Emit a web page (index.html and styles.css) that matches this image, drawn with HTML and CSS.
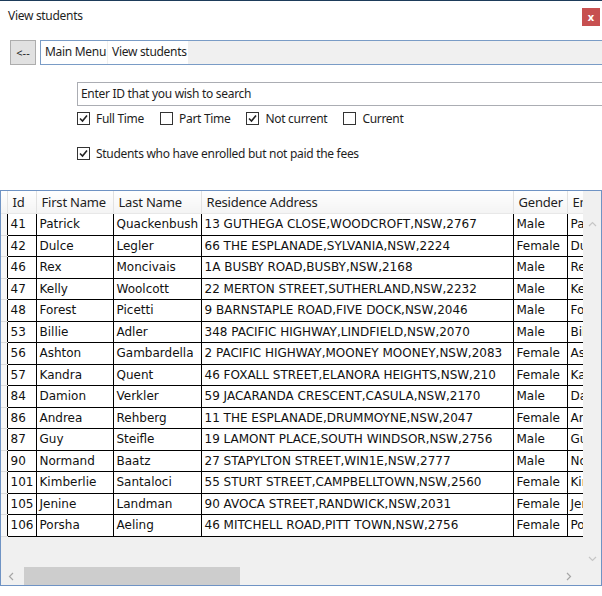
FILE: index.html
```html
<!DOCTYPE html>
<html>
<head>
<meta charset="utf-8">
<link rel="stylesheet" href="styles.css">
</head>
<body>
<div class="window">
  <div class="titlebar">
    <span class="title">View students</span>
    <span class="close">x</span>
  </div>
  <div class="navrow">
    <button class="back">&lt;--</button>
    <div class="crumbs">
      <span class="crumb">Main Menu</span>
      <span class="crumb">View students</span>
    </div>
  </div>
  <div class="filters">
    <div class="search">Enter ID that you wish to search</div>
    <div class="checks">
      <label class="chk"><span class="box on"><svg viewBox="0 0 11 11"><path d="M2 5.5 L4.5 8 L9 2.5"/></svg></span>Full Time</label>
      <label class="chk"><span class="box"></span>Part Time</label>
      <label class="chk"><span class="box on"><svg viewBox="0 0 11 11"><path d="M2 5.5 L4.5 8 L9 2.5"/></svg></span>Not current</label>
      <label class="chk"><span class="box"></span>Current</label>
    </div>
    <div class="checks second">
      <label class="chk"><span class="box on"><svg viewBox="0 0 11 11"><path d="M2 5.5 L4.5 8 L9 2.5"/></svg></span>Students who have enrolled but not paid the fees</label>
    </div>
  </div>
  <div class="gridview">
    <div class="viewport">
      <table class="data">
        <colgroup>
          <col class="c-rh"><col class="c-id"><col class="c-fn"><col class="c-ln"><col class="c-ad"><col class="c-gn"><col class="c-em">
        </colgroup>
        <thead>
          <tr><th class="rh"></th><th>Id</th><th>First Name</th><th>Last Name</th><th>Residence Address</th><th>Gender</th><th>Email</th></tr>
        </thead>
        <tbody>
          <tr><td class="rh"></td><td>41</td><td>Patrick</td><td>Quackenbush</td><td>13 GUTHEGA CLOSE,WOODCROFT,NSW,2767</td><td>Male</td><td>Patrick.Quackenbush@mail.com</td></tr>
          <tr><td class="rh"></td><td>42</td><td>Dulce</td><td>Legler</td><td>66 THE ESPLANADE,SYLVANIA,NSW,2224</td><td>Female</td><td>Dulce.Legler@mail.com</td></tr>
          <tr><td class="rh"></td><td>46</td><td>Rex</td><td>Moncivais</td><td>1A BUSBY ROAD,BUSBY,NSW,2168</td><td>Male</td><td>Rex.Moncivais@mail.com</td></tr>
          <tr><td class="rh"></td><td>47</td><td>Kelly</td><td>Woolcott</td><td>22 MERTON STREET,SUTHERLAND,NSW,2232</td><td>Male</td><td>Kelly.Woolcott@mail.com</td></tr>
          <tr><td class="rh"></td><td>48</td><td>Forest</td><td>Picetti</td><td>9 BARNSTAPLE ROAD,FIVE DOCK,NSW,2046</td><td>Male</td><td>Forest.Picetti@mail.com</td></tr>
          <tr><td class="rh"></td><td>53</td><td>Billie</td><td>Adler</td><td>348 PACIFIC HIGHWAY,LINDFIELD,NSW,2070</td><td>Male</td><td>Billie.Adler@mail.com</td></tr>
          <tr><td class="rh"></td><td>56</td><td>Ashton</td><td>Gambardella</td><td>2 PACIFIC HIGHWAY,MOONEY MOONEY,NSW,2083</td><td>Female</td><td>Ashton.Gambardella@mail.com</td></tr>
          <tr><td class="rh"></td><td>57</td><td>Kandra</td><td>Quent</td><td>46 FOXALL STREET,ELANORA HEIGHTS,NSW,210</td><td>Female</td><td>Kandra.Quent@mail.com</td></tr>
          <tr><td class="rh"></td><td>84</td><td>Damion</td><td>Verkler</td><td>59 JACARANDA CRESCENT,CASULA,NSW,2170</td><td>Male</td><td>Damion.Verkler@mail.com</td></tr>
          <tr><td class="rh"></td><td>86</td><td>Andrea</td><td>Rehberg</td><td>11 THE ESPLANADE,DRUMMOYNE,NSW,2047</td><td>Female</td><td>Andrea.Rehberg@mail.com</td></tr>
          <tr><td class="rh"></td><td>87</td><td>Guy</td><td>Steifle</td><td>19 LAMONT PLACE,SOUTH WINDSOR,NSW,2756</td><td>Male</td><td>Guy.Steifle@mail.com</td></tr>
          <tr><td class="rh"></td><td>90</td><td>Normand</td><td>Baatz</td><td>27 STAPYLTON STREET,WIN1E,NSW,2777</td><td>Male</td><td>Normand.Baatz@mail.com</td></tr>
          <tr><td class="rh"></td><td>101</td><td>Kimberlie</td><td>Santaloci</td><td>55 STURT STREET,CAMPBELLTOWN,NSW,2560</td><td>Female</td><td>Kimberlie.Santaloci@mail.com</td></tr>
          <tr><td class="rh"></td><td>105</td><td>Jenine</td><td>Landman</td><td>90 AVOCA STREET,RANDWICK,NSW,2031</td><td>Female</td><td>Jenine.Landman@mail.com</td></tr>
          <tr><td class="rh"></td><td>106</td><td>Porsha</td><td>Aeling</td><td>46 MITCHELL ROAD,PITT TOWN,NSW,2756</td><td>Female</td><td>Porsha.Aeling@mail.com</td></tr>
        </tbody>
      </table>
    </div>
    <div class="vscroll">
      <span class="arrow"><svg viewBox="0 0 9 6"><path d="M1 5 L4.5 1.5 L8 5"/></svg></span>
      <span class="arrow"><svg viewBox="0 0 9 6"><path d="M1 1 L4.5 4.5 L8 1"/></svg></span>
    </div>
    <div class="hscroll">
      <span class="harrow left"><svg viewBox="0 0 6 9"><path d="M5 1 L1.5 4.5 L5 8"/></svg></span>
      <span class="thumb"></span>
      <span class="harrow right"><svg viewBox="0 0 6 9"><path d="M1 1 L4.5 4.5 L1 8"/></svg></span>
    </div>
    <div class="corner"></div>
  </div>
</div>
</body>
</html>
```

FILE: styles.css
```css
html, body {
  margin: 0;
  padding: 0;
  background: #ffffff;
}
body {
  width: 602px;
  height: 596px;
  overflow: hidden;
  font-family: "Noto Sans", "Open Sans", sans-serif;
  font-size: 12px;
  letter-spacing: -0.3px;
  color: #1e1e1e;
}
.window {
  border-top: 1px solid #1d3b5a;
}
.titlebar {
  height: 39px;
  display: flex;
  align-items: flex-start;
  justify-content: space-between;
  padding: 0 2px 0 8px;
}
.title {
  margin-top: 7px;
  line-height: 16px;
}
.close {
  margin-top: 7px;
  width: 18px;
  height: 18px;
  background: #c75050;
  color: #ffffff;
  font-weight: bold;
  font-size: 11px;
  letter-spacing: 0;
  line-height: 17px;
  text-align: center;
}
.navrow {
  display: flex;
  align-items: stretch;
  gap: 4px;
  padding-left: 10px;
  height: 25px;
}
.back {
  width: 26px;
  margin: 0;
  padding: 0;
  background: #e1e1e1;
  border: 1px solid #adadad;
  font-family: "Noto Sans", sans-serif;
  font-size: 11px;
  letter-spacing: 0;
  color: #1e1e1e;
}
.crumbs {
  flex: 1;
  margin-right: -20px;
  border: 1px solid #7a9cc6;
  background: #f0f0f0;
  display: flex;
  align-items: stretch;
  gap: 1px;
}
.crumb {
  background: #ffffff;
  padding: 0 1px 0 4px;
  line-height: 22px;
}
.filters {
  padding-left: 77px;
  padding-top: 17px;
}
.search {
  height: 22px;
  border: 1px solid #abadb3;
  border-right: none;
  margin-right: -10px;
  padding-left: 3px;
  line-height: 21px;
}
.checks {
  display: flex;
  gap: 0;
  margin-top: 6px;
  height: 13px;
  align-items: center;
}
.checks.second {
  margin-top: 22px;
}
.chk {
  display: flex;
  align-items: center;
  gap: 6px;
  line-height: 13px;
}
.chk + .chk {
  margin-left: 16px;
}
.box {
  width: 11px;
  height: 11px;
  border: 1px solid #333333;
  background: #ffffff;
  display: flex;
}
.box svg {
  width: 11px;
  height: 11px;
  fill: none;
  stroke: #222222;
  stroke-width: 1.6;
}
.gridview {
  margin-top: 30px;
  height: 394px;
  border: 1px solid #6f93c4;
  background: #f0f0f0;
  display: grid;
  grid-template-columns: 582px 18px;
  grid-template-rows: 22px 1fr 18px;
}
.viewport {
  grid-column: 1;
  grid-row: 1 / 3;
  overflow: hidden;
}
.data {
  border-collapse: collapse;
  table-layout: fixed;
  width: 692px;
  font-family: "DejaVu Sans", Verdana, sans-serif;
  font-size: 12px;
  letter-spacing: 0;
  color: #111111;
}
.c-rh { width: 6px; }
.c-id { width: 29px; }
.c-fn { width: 77px; }
.c-ln { width: 88px; }
.c-ad { width: 312px; }
.c-gn { width: 54px; }
.c-em { width: 126px; }
.data th {
  height: 22px;
  padding: 0 0 0 5px;
  text-align: left;
  font-family: "Noto Sans", "Open Sans", sans-serif;
  font-weight: normal;
  font-size: 13px;
  letter-spacing: -0.2px;
  color: #1e1e1e;
  background: linear-gradient(#ffffff, #f4f4f4);
  border-right: 1px solid #e2e2e2;
  border-bottom: 1px solid #e8e8e8;
  white-space: nowrap;
  overflow: hidden;
}
.data td {
  height: 20.5px;
  padding: 0 0 0 3px;
  background: #ffffff;
  border: 1px solid #000000;
  border-top: none;
  white-space: nowrap;
  overflow: hidden;
}
.data th.rh {
  padding: 0;
}
.data td.rh {
  padding: 0;
  background: #f7f7f7;
  border: none;
  border-bottom: 1px solid #dddddd;
}
.vscroll {
  grid-column: 2;
  grid-row: 2;
  display: flex;
  flex-direction: column;
  justify-content: space-between;
  align-items: center;
  padding: 8px 0 5px 0;
}
.arrow svg {
  display: block;
  width: 9px;
  height: 6px;
  fill: none;
  stroke: #c6c6c6;
  stroke-width: 1.2;
}
.hscroll {
  grid-column: 1;
  grid-row: 3;
  display: flex;
  align-items: stretch;
}
.harrow {
  display: flex;
  align-items: center;
  justify-content: center;
}
.harrow.left {
  width: 23px;
  padding-right: 4px;
  box-sizing: border-box;
}
.harrow.right {
  width: 24px;
  margin-left: auto;
  padding-right: 4px;
  box-sizing: border-box;
}
.harrow svg {
  display: block;
  width: 6px;
  height: 9px;
  fill: none;
  stroke: #a6a6a6;
  stroke-width: 1.2;
}
.thumb {
  width: 216px;
  background: #cdcdcd;
}
.corner {
  grid-column: 2;
  grid-row: 3;
}
```
